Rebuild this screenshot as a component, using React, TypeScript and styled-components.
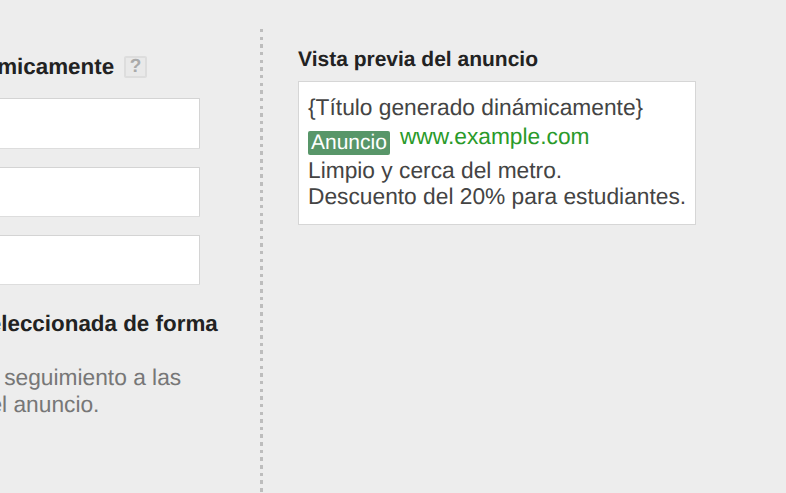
import styled, { createGlobalStyle } from "styled-components";

const GlobalStyle = createGlobalStyle`
  html, body {
    margin: 0;
    height: 100%;
    overflow: hidden;
    background: #ededed;
  }
  #root {
    height: 100%;
  }
`;

const Page = styled.div`
  display: flex;
  width: 786px;
  height: 493px;
  overflow: hidden;
  font-family: "Liberation Sans", Arial, sans-serif;
  text-rendering: geometricPrecision;
  color: #222;
`;

const FormColumn = styled.div`
  flex: 0 0 260px;
  overflow: hidden;
`;

const Form = styled.div`
  width: 448px;
  margin-left: -223px;
  padding-top: 54px;
`;

const Heading = styled.h2`
  margin: 0;
  font-size: 21px;
  line-height: 26px;
  font-weight: 700;
  color: #222;
`;

const FormHeading = styled(Heading)`
  display: flex;
  align-items: center;
  gap: 10px;
  height: 26px;
  font-size: 22.4px;
  white-space: nowrap;
`;

const HelpIcon = styled.span`
  display: flex;
  align-items: center;
  justify-content: center;
  width: 23px;
  height: 22px;
  box-sizing: border-box;
  border: 2px solid #ddd;
  border-radius: 2px;
  background: #e9e9e9;
  color: #aaa;
  font-size: 19px;
  font-weight: 700;
`;

const Fields = styled.div`
  display: flex;
  flex-direction: column;
  gap: 17.75px;
  margin-top: 18.25px;
`;

const Field = styled.div`
  width: 423px;
  height: 50.5px;
  box-sizing: border-box;
  background: #fff;
  border: 1px solid #d4d4d4;
  border-bottom-color: #ddd;
  border-radius: 1px;
`;

const OptionTitle = styled(Heading)`
  margin: 26px 0 0 1.5px;
  font-size: 22.4px;
`;

const Note = styled.p`
  margin: 1px 0 0 -0.5px;
  font-size: 22.75px;
  line-height: 27px;
  color: #777;
`;

const Divider = styled.div`
  flex: 0 0 3px;
  margin-top: 29px;
  background: repeating-linear-gradient(to bottom, #bdbdbd 0 3.5px, transparent 3.5px 7.65px);
`;

const PreviewColumn = styled.div`
  flex: 0 0 auto;
  margin-left: 35px;
  padding-top: 47px;
`;

const Preview = styled.div`
  width: 398px;
  height: 144px;
  box-sizing: border-box;
  margin-top: 8px;
  padding: 12px 9px;
  background: #fff;
  border: 1px solid #d6d6d6;
  font-size: 22.75px;
  line-height: 26.5px;
  color: #444;
  white-space: nowrap;
`;

const AdLine = styled.div`
  display: flex;
  align-items: flex-start;
  gap: 10px;
  height: 36px;
`;

const AdBadge = styled.span`
  margin-top: 10px;
  padding: 0 3px;
  height: 24.5px;
  line-height: 24px;
  border-radius: 2px;
  background: #589669;
  color: #fff;
  font-size: 21px;
`;

const AdUrl = styled.span`
  color: #2a9a2a;
  line-height: 30px;
`;

export default function App() {
  return (
    <Page>
      <GlobalStyle />
      <FormColumn>
        <Form>
          <FormHeading>
            Título generado dinámicamente
            <HelpIcon>?</HelpIcon>
          </FormHeading>
          <Fields>
            <Field />
            <Field />
            <Field />
          </Fields>
          <OptionTitle>Página de destino seleccionada de forma dinámica</OptionTitle>
          <Note>Aplica una plantilla de seguimiento a las URL de la página en el anuncio.</Note>
        </Form>
      </FormColumn>
      <Divider />
      <PreviewColumn>
        <Heading>Vista previa del anuncio</Heading>
        <Preview>
          <div>{"{Título generado dinámicamente}"}</div>
          <AdLine>
            <AdBadge>Anuncio</AdBadge>
            <AdUrl>www.example.com</AdUrl>
          </AdLine>
          <div>Limpio y cerca del metro.</div>
          <div>Descuento del 20% para estudiantes.</div>
        </Preview>
      </PreviewColumn>
    </Page>
  );
}
